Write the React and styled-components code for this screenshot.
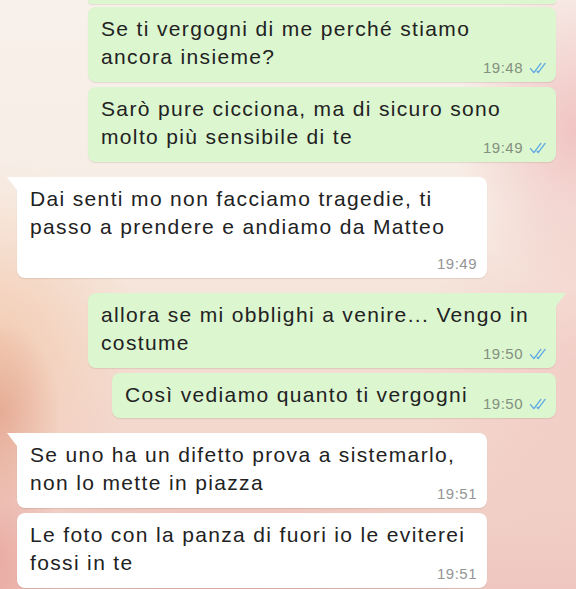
import React from "react";
import styled, { createGlobalStyle } from "styled-components";

const GlobalStyle = createGlobalStyle`
  html, body {
    margin: 0;
    padding: 0;
    overflow: hidden;
  }
  body {
    font-family: "Liberation Sans", Arial, sans-serif;
  }
`;

const GREEN = "#dcf6d0";
const WHITE = "#ffffff";

const Page = styled.div`
  height: 589px;
  overflow: hidden;
  background:
    radial-gradient(60px 90px at 0% 70%, rgba(214, 128, 100, 0.45), transparent 100%),
    radial-gradient(140px 180px at 0% 58%, rgba(242, 186, 150, 0.5), transparent 100%),
    radial-gradient(120px 160px at 100% 22%, rgba(236, 168, 170, 0.6), transparent 100%),
    radial-gradient(160px 180px at 100% 62%, rgba(240, 186, 186, 0.45), transparent 100%),
    radial-gradient(260px 120px at 40% 100%, rgba(234, 164, 156, 0.55), transparent 100%),
    radial-gradient(60px 140px at 0% 95%, rgba(228, 150, 140, 0.55), transparent 100%),
    linear-gradient(180deg, #f8f0ea 0%, #f7ede5 35%, #f4dfd3 60%, #f1d0c7 85%, #efc7c0 100%);
`;

const Chat = styled.div`
  display: flex;
  flex-direction: column;
  gap: 15px;
  padding: 0 20px 0 17px;
`;

const Group = styled.div`
  display: flex;
  flex-direction: column;
  gap: 5px;
  align-items: ${(p) => (p.$out ? "flex-end" : "flex-start")};
`;

const Edge = styled.div`
  width: 468px;
  height: 4px;
  margin-bottom: -2px;
  background: ${GREEN};
  border-radius: 0 0 8px 8px;
  box-shadow: 0 1px 1px rgba(120, 110, 100, 0.15);
`;

const Bubble = styled.div`
  position: relative;
  box-sizing: border-box;
  max-width: ${(p) => (p.$out ? "468px" : "470px")};
  display: flex;
  flex-wrap: wrap;
  align-items: flex-start;
  justify-content: flex-end;
  padding: 8px ${(p) => (p.$out ? "8px" : "10px")} 5px 13px;
  background: ${(p) => (p.$out ? GREEN : WHITE)};
  border-radius: 8px;
  box-shadow: 0 1px 1px rgba(120, 100, 90, 0.16);
  ${(p) =>
    p.$tail &&
    (p.$out
      ? `border-top-right-radius: 0;
         &::before {
           content: "";
           position: absolute;
           top: 0;
           right: -10px;
           border-top: 13px solid ${GREEN};
           border-right: 10px solid transparent;
         }`
      : `border-top-left-radius: 0;
         &::before {
           content: "";
           position: absolute;
           top: 0;
           left: -10px;
           border-top: 13px solid ${WHITE};
           border-left: 10px solid transparent;
         }`)}
`;

const Text = styled.div`
  flex: 1 1 auto;
  font-size: 21px;
  line-height: 27.5px;
  letter-spacing: 1.35px;
  color: #222;
`;

const Meta = styled.div`
  display: flex;
  align-items: center;
  gap: 5px;
  margin-top: ${(p) => p.$top}px;
  margin-left: 15px;
  height: 18px;
  font-size: 15px;
  line-height: 18px;
  letter-spacing: 0.5px;
  color: ${(p) => (p.$out ? "#84907f" : "#959595")};
`;

const Ticks = () => (
  <svg width="20" height="12" viewBox="0 0 17 12" fill="none">
    <path
      d="M1 6.6 L4.4 10.6 L11.4 1.4 M7.6 9.2 L8.6 10.6 L15.6 1.4"
      stroke="#5aa8e4"
      strokeWidth="1.3"
      strokeLinecap="round"
      strokeLinejoin="round"
    />
  </svg>
);

const groups = [
  {
    out: true,
    edge: true,
    items: [
      { text: "Se ti vergogni di me perché stiamo ancora insieme?", time: "19:48", top: -11 },
      { text: "Sarò pure cicciona, ma di sicuro sono molto più sensibile di te", time: "19:49", top: -11 },
    ],
  },
  {
    out: false,
    items: [
      {
        text: "Dai senti mo non facciamo tragedie, ti passo a prendere e andiamo da Matteo",
        time: "19:49",
        top: 15,
      },
    ],
  },
  {
    out: true,
    items: [
      { text: "allora se mi obblighi a venire... Vengo in costume", time: "19:50", top: -11 },
      { text: "Così vediamo quanto ti vergogni", time: "19:50", top: 14 },
    ],
  },
  {
    out: false,
    items: [
      { text: "Se uno ha un difetto prova a sistemarlo, non lo mette in piazza", time: "19:51", top: -11 },
      { text: "Le foto con la panza di fuori io le eviterei fossi in te", time: "19:51", top: -11 },
    ],
  },
];

const App = () => {
  return (
    <Page>
      <GlobalStyle />
      <Chat>
        {groups.map((g, gi) => (
          <Group key={gi} $out={g.out}>
            {g.edge && <Edge />}
            {g.items.map((m, i) => (
              <Bubble key={i} $out={g.out} $tail={!g.edge && i === 0}>
                <Text>
                  <span>{m.text}</span>
                </Text>
                <Meta $out={g.out} $top={m.top}>
                  {m.time}
                  {g.out && <Ticks />}
                </Meta>
              </Bubble>
            ))}
          </Group>
        ))}
      </Chat>
    </Page>
  );
};

export default App;
